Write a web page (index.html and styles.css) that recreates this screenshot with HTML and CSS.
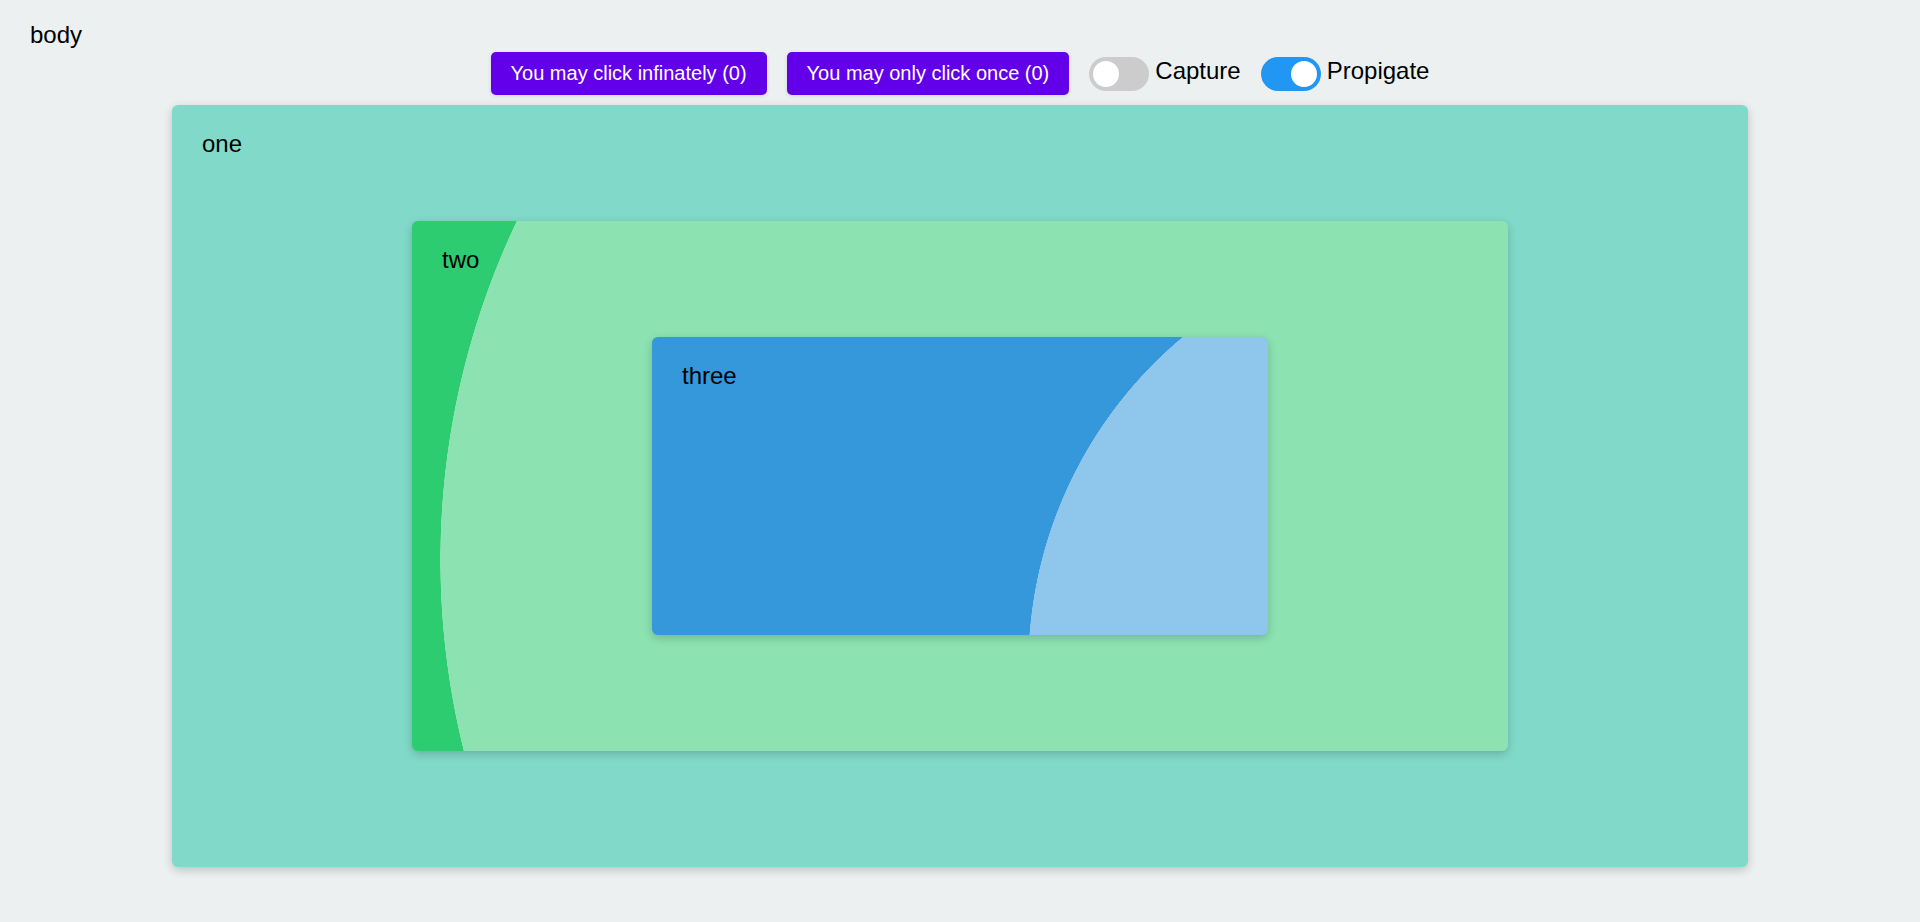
FILE: index.html
```html
<!DOCTYPE html>
<html lang="en">
<head>
<meta charset="utf-8">
<title>Event propagation</title>
<link rel="stylesheet" href="styles.css">
</head>
<body>
  <div class="body-label">body</div>
  <div class="controls">
    <button class="btn">You may click infinately (0)</button>
    <button class="btn">You may only click once (0)</button>
    <label class="toggle">
      <input type="checkbox" class="toggle-input">
      <span class="slider"></span>
      <span class="toggle-text">Capture</span>
    </label>
    <label class="toggle">
      <input type="checkbox" class="toggle-input" checked>
      <span class="slider"></span>
      <span class="toggle-text">Propigate</span>
    </label>
  </div>
  <div class="box box-one">
    <div class="box-label">one</div>
    <div class="box box-two">
      <div class="box-label">two</div>
      <div class="box box-three">
        <div class="box-label">three</div>
      </div>
    </div>
  </div>
</body>
</html>
```
FILE: styles.css
```css
* { box-sizing: border-box; }

html, body { height: 100%; }

body {
  margin: 0;
  padding: 21px 30px 0;
  background: #ecf0f1;
  font-family: "Liberation Sans", Arial, sans-serif;
  font-size: 24px;
  color: #000;
  overflow: hidden;
}

.body-label {
  line-height: 28px;
  height: 28px;
}

.controls {
  margin-top: 3px;
  display: flex;
  justify-content: center;
  align-items: center;
  gap: 20px;
  height: 43px;
}

.btn {
  font-family: "Liberation Sans", Arial, sans-serif;
  font-size: 20px;
  line-height: 23px;
  color: #fff;
  background: #6200ea;
  border: none;
  border-radius: 5px;
  padding: 10px 20px;
  box-shadow: 0 1px 4px rgba(0, 0, 0, 0.12);
  cursor: pointer;
}

.toggle {
  display: flex;
  align-items: center;
  gap: 6px;
  cursor: pointer;
}

.toggle-input {
  display: none;
}

.slider {
  position: relative;
  display: block;
  width: 60px;
  height: 34px;
  border-radius: 34px;
  background: #ccc;
}

.slider::before {
  content: "";
  position: absolute;
  left: 4px;
  top: 4px;
  width: 26px;
  height: 26px;
  border-radius: 50%;
  background: #fff;
}

.toggle-input:checked + .slider {
  background: #2196f3;
}

.toggle-input:checked + .slider::before {
  transform: translateX(26px);
}

.toggle-text {
  line-height: 28px;
  padding-bottom: 5px;
}

.box {
  display: grid;
  border-radius: 6px;
  box-shadow: 0 3px 10px rgba(0, 0, 0, 0.2);
  overflow: hidden;
}

.box-label {
  grid-area: 1 / 1;
  align-self: start;
  justify-self: start;
  margin: 25px 30px;
  line-height: 28px;
  position: relative;
  z-index: 1;
}

.box-one {
  width: 1576px;
  height: 762px;
  margin: 10px auto 0;
  background: #81dac9;
}

.box-two {
  grid-area: 1 / 1;
  margin: 116px 240px;
  background-color: #2ecc71;
  background-image: radial-gradient(circle 790px at 818px 339px, rgba(255, 255, 255, 0.45) 789.5px, rgba(255, 255, 255, 0) 790px);
}

.box-three {
  grid-area: 1 / 1;
  margin: 116px 240px;
  width: 616px;
  height: 298px;
  background-color: #3498db;
  background-image: radial-gradient(circle 430px at 806px 330px, rgba(255, 255, 255, 0.45) 429.5px, rgba(255, 255, 255, 0) 430px);
}
```
